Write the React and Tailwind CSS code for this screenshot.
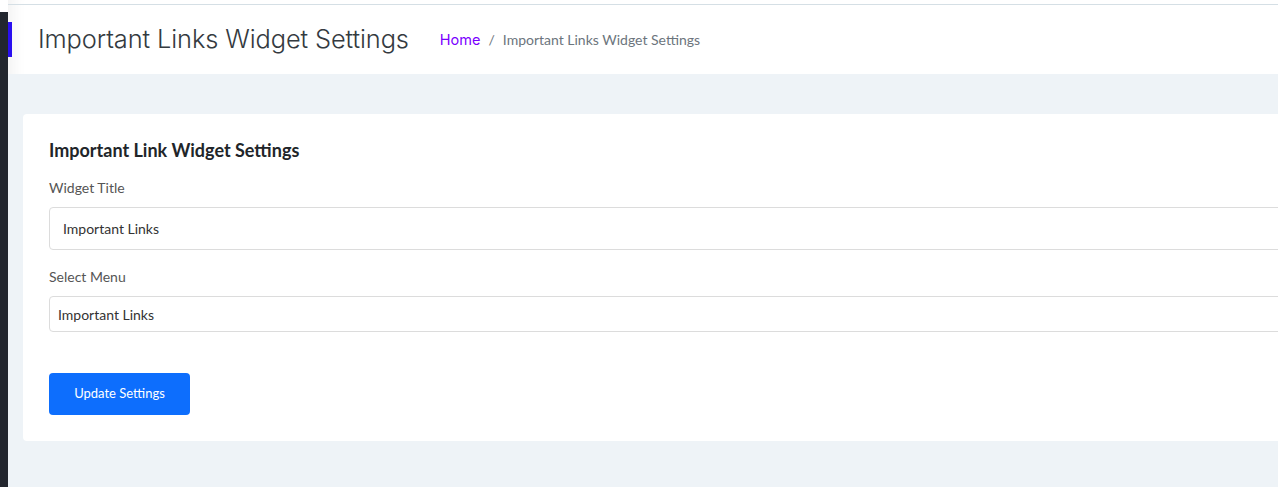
import React, { useState } from "react";

export default function App() {
  const [title, setTitle] = useState("Important Links");
  const [menu, setMenu] = useState("Important Links");

  return (
    <div className="flex h-[487px] overflow-hidden bg-white font-['Lato',sans-serif]">
      {/* SIDEBAR STUB */}
      <aside className="relative mt-[12px] w-[8px] shrink-0 bg-[#22262e]">
        <span className="absolute left-full top-[10px] h-[35px] w-[4px] bg-[#2a0ff0]" />
      </aside>

      {/* MAIN */}
      <main className="flex min-w-0 flex-1 flex-col pt-[4px] shadow-[inset_18px_0_14px_-12px_rgba(0,0,0,0.05)]">
        <header className="flex h-[70px] shrink-0 items-center border-t border-[#d5dfe5] pl-[30px]">
          <h1 className="font-['Inter',sans-serif] text-[25.4px] font-light tracking-[-0.1px] text-[#343a40]">
            Important Links Widget Settings
          </h1>
          <nav className="ml-[31px] flex items-center text-[14px]">
            <a href="#" className="font-['Inter',sans-serif] text-[14.5px] text-[#7a00ff]">
              Home
            </a>
            <span className="px-[8px] text-[#6c757d]">/</span>
            <span className="text-[#6c757d]">Important Links Widget Settings</span>
          </nav>
        </header>

        <section className="flex-1 bg-[#eef3f7] pl-[15px] pt-[40px]">
          <div className="w-[1300px] rounded-[4px] bg-white px-[26px] pb-[26px] pt-[24px]">
            <h2 className="text-[18px] font-bold leading-[24px] text-[#212529]">
              Important Link Widget Settings
            </h2>

            <label className="mt-[16px] block text-[14px] leading-[20px] text-[#555]">
              Widget Title
            </label>
            <input
              className="mt-[9px] block h-[43px] w-full rounded-[4px] border border-[#dcdcdc] px-[13px] text-[14px] text-[#333] outline-none"
              value={title}
              onChange={(e) => setTitle(e.target.value)}
            />

            <label className="mt-[17px] block text-[14px] leading-[20px] text-[#555]">
              Select Menu
            </label>
            <select
              className="mt-[9px] block h-[36px] w-full appearance-none rounded-[4px] border border-[#dcdcdc] bg-white px-[8px] text-[14px] text-[#333] outline-none"
              value={menu}
              onChange={(e) => setMenu(e.target.value)}
            >
              <option>Important Links</option>
            </select>

            <button className="mt-[41px] h-[42px] w-[141px] rounded-[4px] bg-[#0d6efd] text-[13px] text-white">
              Update Settings
            </button>
          </div>
        </section>
      </main>
    </div>
  );
}
